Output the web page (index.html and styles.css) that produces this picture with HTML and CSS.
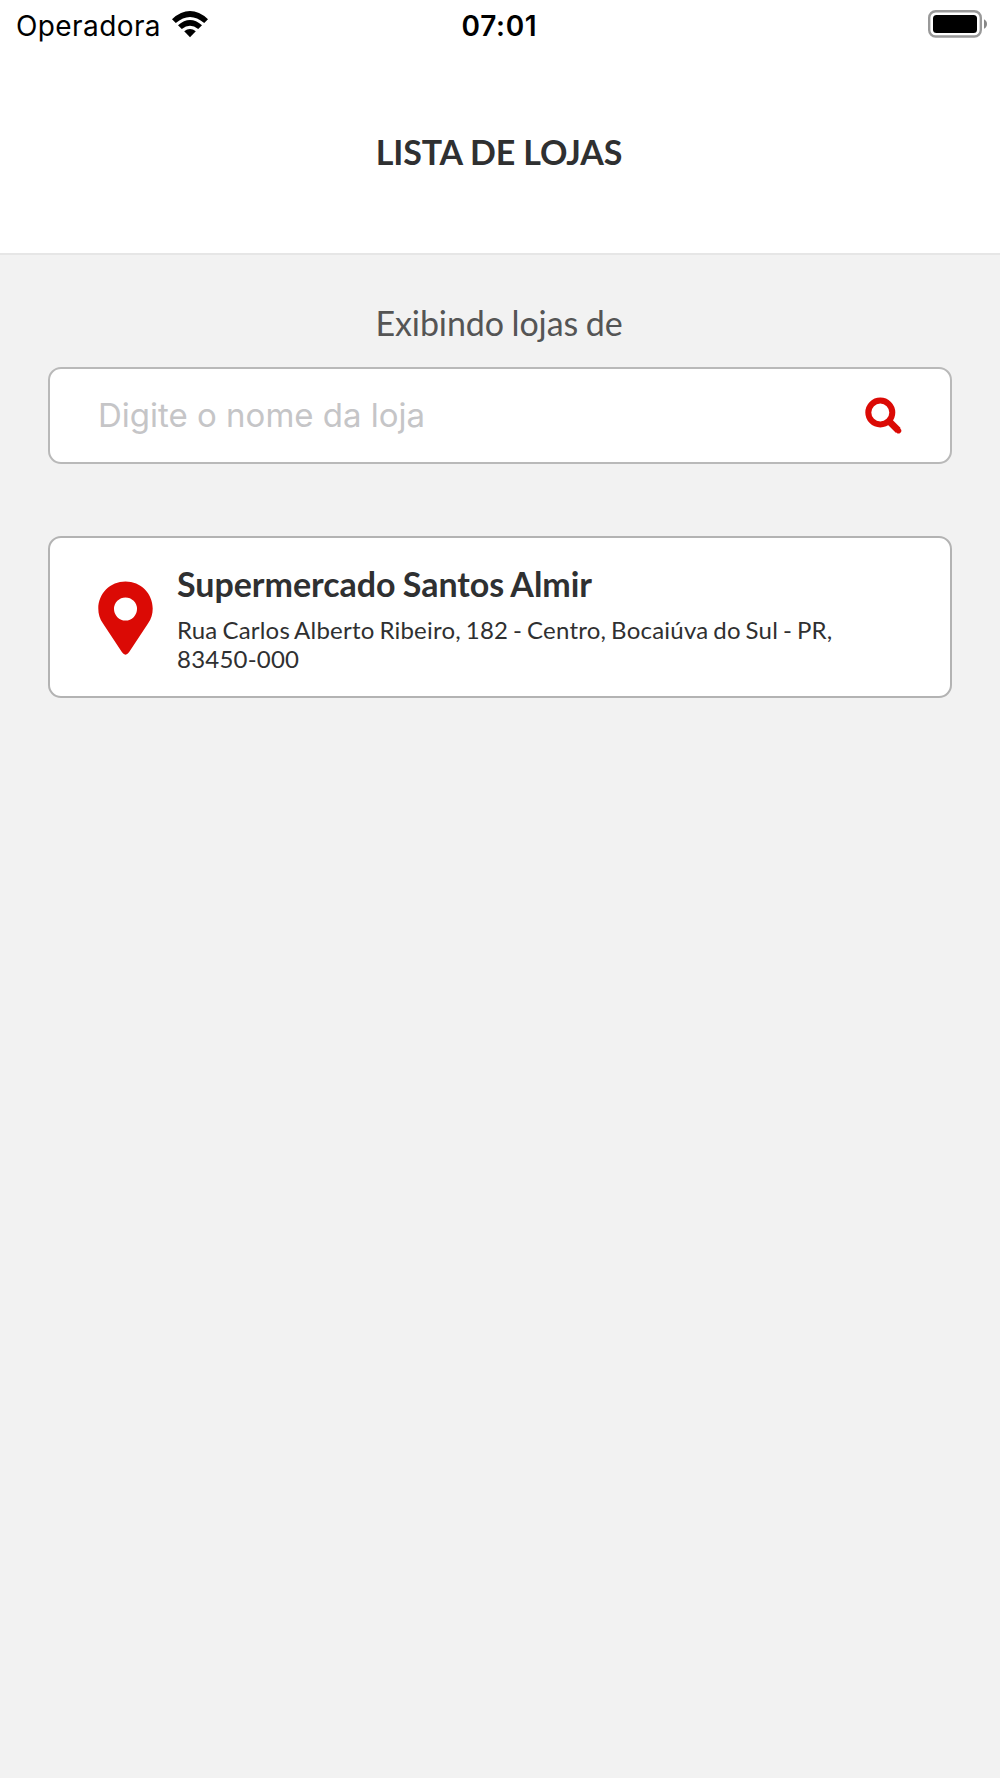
FILE: index.html
```html
<!DOCTYPE html>
<html lang="pt-BR">
<head>
<meta charset="utf-8">
<title>Lista de Lojas</title>
<link rel="stylesheet" href="styles.css">
</head>
<body>
<div class="status-bar">
  <div class="status-left">
    <span class="carrier">Operadora</span>
    <svg class="wifi" width="38" height="28" viewBox="0 0 38 28">
      <path d="M1 9.200Q19-7 37 9.200L33.200 13.100Q19 0.800 4.800 13.100Z"/>
      <path d="M7 15.200Q19 4.800 31 15.200L27.200 19Q19 12.400 10.800 19Z"/>
      <path d="M13.200 21.300Q19 16.700 24.800 21.300L19 27.200Z"/>
    </svg>
  </div>
  <span class="clock">07:01</span>
  <svg class="battery" width="60" height="28" viewBox="0 0 60 28">
    <rect x="1.200" y="1.200" width="51.600" height="25.300" rx="6.500" fill="#fff" stroke="#999" stroke-width="2.400"/>
    <rect x="5" y="5" width="44" height="18" rx="3.500"/>
    <path d="M56 9.200Q59 10.800 59 14T56 18.800Z" fill="#888"/>
  </svg>
</div>
<header class="header">
  <h1 class="title">LISTA DE LOJAS</h1>
</header>
<main class="content">
  <p class="caption">Exibindo lojas de</p>
  <div class="search">
    <span class="placeholder">Digite o nome da loja</span>
    <svg class="search-icon" width="38" height="38" viewBox="0 0 38 38">
      <circle cx="15.300" cy="15.500" r="12" fill="none" stroke="#db0a05" stroke-width="6"/>
      <path d="M25 25.200L33.200 33.400" stroke="#db0a05" stroke-width="6.800"/>
      <path d="M32.500 32.700L33.500 33.700" stroke="#db0a05" stroke-width="5.500" stroke-linecap="round"/>
    </svg>
  </div>
  <article class="store">
    <svg class="pin" width="55" height="74" viewBox="0 0 55 74">
      <path fill="#db0a05" fill-rule="evenodd" d="M27.500 0.500C12.400 0.500 0.300 12.400 0.300 27.500C0.300 33.300 1.600 37.600 5 42.600L24 71.300Q27.500 76 31 71.300L50 42.600C53.400 37.600 54.700 33.300 54.700 27.500C54.700 12.400 42.600 0.500 27.500 0.500ZM27.500 16.500A11.500 11.500 0 1 1 27.500 39.500A11.500 11.500 0 1 1 27.500 16.500Z"/>
    </svg>
    <div class="store-info">
      <h2 class="store-name">Supermercado Santos Almir</h2>
      <p class="store-address">Rua Carlos Alberto Ribeiro, 182 - Centro, Bocaiúva do Sul - PR, 83450-000</p>
    </div>
  </article>
</main>
</body>
</html>
```
FILE: styles.css
```css
* { box-sizing: border-box; }
body {
  margin: 0;
  min-height: 1778px;
  display: flex;
  flex-direction: column;
  background: #f2f2f2;
  color: #2f3031;
  font-family: Lato, sans-serif;
}
h1, h2, p { margin: 0; }
.status-bar {
  height: 53px;
  padding: 9px 12px 0 16px;
  display: grid;
  grid-template-columns: 1fr auto 1fr;
  background: #fff;
  color: #000;
  font-family: Inter, sans-serif;
  font-size: 28px;
  line-height: 34px;
}
.status-left { display: flex; gap: 10px; }
.carrier { letter-spacing: 0.400px; }
.wifi { margin-top: 1px; }
.clock { margin-right: 5px; font-weight: 600; letter-spacing: 0.700px; }
.battery { justify-self: end; margin-top: 1px; }
.header {
  height: 202px;
  padding-bottom: 2px;
  display: flex;
  align-items: center;
  justify-content: center;
  background: #fff;
  border-bottom: 2px solid #e6e6e6;
}
.title { margin-right: 2px; font-size: 34px; line-height: 42px; font-weight: 700; letter-spacing: -0.150px; }
.content { padding: 47px 48px 0; }
.caption {
  padding-right: 2px;
  color: #555;
  font-size: 34px;
  line-height: 41px;
  letter-spacing: -0.100px;
  word-spacing: -1px;
  text-align: center;
}
.search {
  height: 97px;
  margin-top: 24px;
  padding: 0 47px 0 48px;
  display: flex;
  align-items: center;
  justify-content: space-between;
  background: #fff;
  border: 2px solid #b9b9b9;
  border-radius: 13px;
}
.placeholder {
  padding-bottom: 2px;
  color: #c5c5c7;
  font-family: Inter, sans-serif;
  font-size: 33px;
}
.store {
  height: 162px;
  margin-top: 72px;
  padding: 0 48px;
  display: flex;
  align-items: center;
  gap: 24px;
  background: #fff;
  border: 2px solid #b3b3b3;
  border-radius: 13px;
}
.pin { flex: none; margin-top: 2px; }
.store-info { padding-top: 2px; }
.store-name {
  font-size: 34px;
  line-height: 42px;
  font-weight: 700;
  letter-spacing: -0.030px;
  word-spacing: -1px;
}
.store-address {
  margin-top: 10px;
  font-size: 24px;
  line-height: 29px;
  letter-spacing: 0.220px;
  word-spacing: -1.500px;
}
```
